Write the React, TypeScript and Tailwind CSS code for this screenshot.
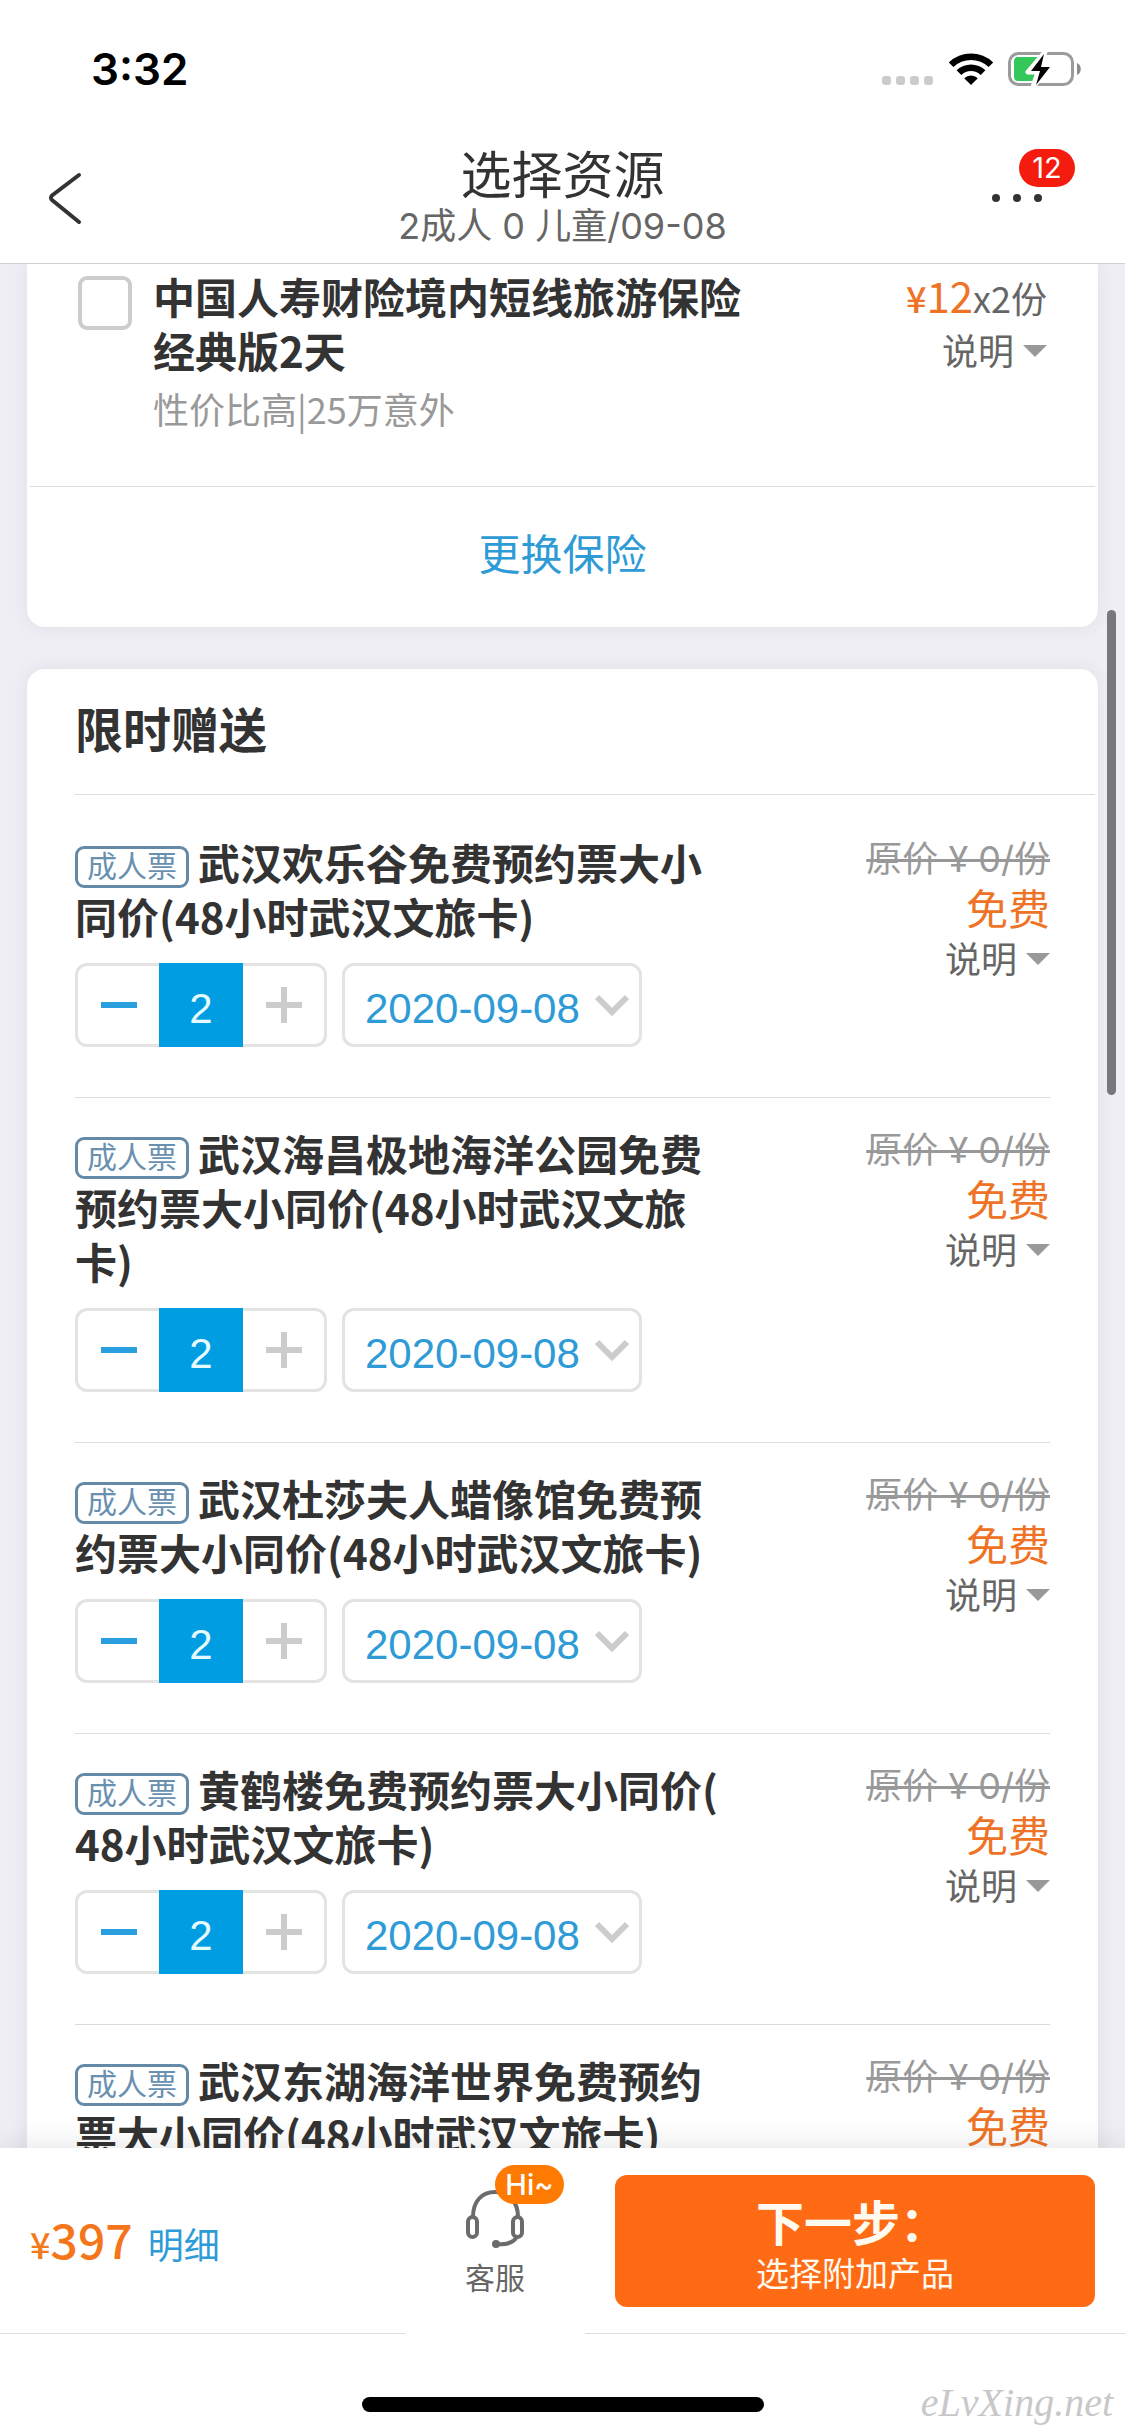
import { useState } from "react";

type Gift = { id: string; name: string };

const gifts: Gift[] = [
  { id: "happy-valley", name: "武汉欢乐谷免费预约票大小同价(48小时武汉文旅卡)" },
  { id: "polar-ocean", name: "武汉海昌极地海洋公园免费预约票大小同价(48小时武汉文旅卡)" },
  { id: "madame-tussauds", name: "武汉杜莎夫人蜡像馆免费预约票大小同价(48小时武汉文旅卡)" },
  { id: "yellow-crane", name: "黄鹤楼免费预约票大小同价(48小时武汉文旅卡)" },
  { id: "east-lake", name: "武汉东湖海洋世界免费预约票大小同价(48小时武汉文旅卡)" }
];

function StatusBar() {
  return (
    <div className="flex h-[138px] items-center justify-between pl-[91px] pr-[43px]">
      <span className="font-['Inter',sans-serif] text-[44px] font-semibold leading-[54px] text-black">3:32</span>
      <div className="flex items-center">
        <div className="mr-[15px] flex gap-[5px] pt-[23px]">
          {[0, 1, 2, 3].map((n) => (
            <span key={n} className="size-[9px] rounded-[3px] bg-[#cbcbcb]" />
          ))}
        </div>
        <svg className="mr-[14px]" width="46" height="34" viewBox="0 0 46 34">
          <path d="M.8 10.4a32 32 0 0 1 44.4 0l-4.6 4.7a25.3 25.3 0 0 0-35.2 0z" />
          <path d="M8.6 18.3a20.8 20.8 0 0 1 28.8 0l-4.7 4.7a14 14 0 0 0-19.4 0z" />
          <path d="M16.2 26.2a9.8 9.8 0 0 1 13.6 0L23 33z" />
        </svg>
        <svg width="74" height="36" viewBox="0 0 74 36">
          <rect x="1.5" y="2.5" width="63" height="31" rx="9" fill="#fff" stroke="#9b9b9b" strokeWidth="3" />
          <path d="M69 12c5 1.500 5 10.500 0 12z" fill="#8c8c8c" />
          <path d="M10 6h20L18 22h12l-2 8H10c-3 0-4-2-4-5V11c0-3 1-5 4-5z" fill="#34c759" />
          <path d="M37 1 20 21h10l-5 15 17-21H32z" fill="#000" stroke="#fff" strokeWidth="5" strokeLinejoin="round" />
          <path d="M36 3 23 20h9l-4 14 14-18h-9z" fill="#000" />
        </svg>
      </div>
    </div>
  );
}

function Header() {
  return (
    <header className="border-b border-[#cfcfd2] bg-white">
      <StatusBar />
      <div className="relative flex h-[125px] flex-col items-center pt-1">
        <button aria-label="返回" className="absolute left-[47px] top-[33px]">
          <svg width="36" height="54" viewBox="0 0 36 54" fill="none" stroke="#333" strokeWidth="4" strokeLinecap="round">
            <path d="M32 4 5 24.500a3 3 0 0 0 0 4.500L32 51" />
          </svg>
        </button>
        <h1 className="text-[51px] leading-[60px] text-[#333]">选择资源</h1>
        <p className="font-['Inter','Noto_Sans_CJK_SC',sans-serif] text-[36px] leading-[48px] text-[#666]">
          2成人 0 儿童/09-08
        </p>
        <button aria-label="更多" className="absolute right-[83px] top-[56px] flex gap-[13px]">
          <span className="size-2 rounded-full bg-[#333]" />
          <span className="size-2 rounded-full bg-[#333]" />
          <span className="size-2 rounded-full bg-[#333]" />
        </button>
        <span className="absolute right-[50px] top-[11px] flex h-[38px] w-[56px] items-center justify-center rounded-full bg-[#f41b0f] font-['Inter',sans-serif] text-[29px] text-white">
          12
        </span>
      </div>
    </header>
  );
}

function ExplainButton() {
  return (
    <button className="flex items-center gap-[9px] text-[36px] leading-[52px] text-[#666]">
      说明
      <svg className="mt-[4px]" width="24" height="12" viewBox="0 0 24 12" fill="#999">
        <path d="M0 0h24L12 12z" />
      </svg>
    </button>
  );
}

function InsuranceCard() {
  return (
    <section className="rounded-b-[18px] bg-white shadow-[0_0_18px_rgba(60,60,90,0.08)]">
      <div className="flex h-[222px] items-start pl-[51px] pr-[51px] pt-[5px]">
        <input
          id="insurance"
          type="checkbox"
          className="mt-[7px] size-[54px] shrink-0 appearance-none rounded-[9px] border-4 border-[#ccc] bg-white checked:bg-[#009de2]"
        />
        <label htmlFor="insurance" className="ml-[21px] block w-[600px]">
          <span className="block text-[42px] font-bold leading-[54px] text-[#333]">中国人寿财险境内短线旅游保险经典版2天</span>
          <span className="mt-[7px] block text-[36px] leading-[48px] text-[#999]">性价比高|25万意外</span>
        </label>
        <div className="ml-auto flex flex-col items-end">
          <p className="text-[36px] leading-[52px] text-[#666]">
            <span className="font-medium text-[#ee7326]">¥</span>
            <span className="text-[42px] text-[#ee7326]">12</span>x2份
          </p>
          <ExplainButton />
        </div>
      </div>
      <div className="mx-[3px] border-t border-[#dcdcdc]">
        <button className="block h-[140px] w-full pb-[10px] text-[42px] leading-[60px] text-[#2e9bd6]">更换保险</button>
      </div>
    </section>
  );
}

function Stepper({ name }: { name: string }) {
  const [count, setCount] = useState(2);

  return (
    <div className="flex h-[84px] w-[252px]">
      <button
        aria-label="减少"
        onClick={() => setCount(Math.max(0, count - 1))}
        className="flex w-[84px] items-center justify-center rounded-l-[12px] border-[3px] border-r-0 border-[#e3e3e3]"
      >
        <span className="h-[6px] w-[36px] bg-[#2a9fe0]" />
      </button>
      <input
        aria-label={`${name} 份数`}
        readOnly
        value={count}
        className="w-[84px] bg-[#009de2] pt-[6px] text-center font-['Liberation_Sans',sans-serif] text-[42px] text-[#e6fbff] outline-none"
      />
      <button
        aria-label="增加"
        onClick={() => setCount(Math.min(2, count + 1))}
        className="flex w-[84px] items-center justify-center rounded-r-[12px] border-[3px] border-l-0 border-[#e3e3e3]"
      >
        <svg width="36" height="36" viewBox="0 0 36 36" fill="#ccc">
          <path d="M15 0h6v15h15v6H21v15h-6V21H0v-6h15z" />
        </svg>
      </button>
    </div>
  );
}

function DateSelect({ name }: { name: string }) {
  return (
    <div className="relative h-[84px] w-[300px]">
      <select
        aria-label={`${name} 日期`}
        className="size-full appearance-none rounded-[12px] border-[3px] border-[#e3e3e3] bg-white pl-[20px] pt-[6px] font-['Liberation_Sans',sans-serif] text-[42px] text-[#2e9bd6]"
      >
        <option>2020-09-08</option>
      </select>
      <svg className="pointer-events-none absolute right-[13px] top-[31px]" width="34" height="24" viewBox="0 0 34 24" fill="none" stroke="#ccc" strokeWidth="6">
        <path d="M2 3l15 15L32 3" />
      </svg>
    </div>
  );
}

function GiftItem({ gift }: { gift: Gift }) {
  return (
    <li className="flex items-start justify-between border-b border-[#dcdcdc] pb-[50px] pt-[28px] first:pt-[40px]">
      <div className="w-[645px]">
        <h3 className="text-[42px] font-bold leading-[54px] text-[#333] [line-break:anywhere]">
          <span className="mr-[9px] mt-[11px] inline-flex h-[42px] w-[114px] items-center justify-center rounded-[9px] border-[3px] border-[#648aa8] pb-[6px] align-top text-[30px] font-normal leading-[36px] text-[#6a90b0]">
            成人票
          </span>
          {gift.name}
        </h3>
        <div className="mt-[20px] flex gap-[15px]">
          <Stepper name={gift.name} />
          <DateSelect name={gift.name} />
        </div>
      </div>
      <div className="flex flex-col items-end">
        <del className="font-['Inter','Noto_Sans_CJK_SC',sans-serif] text-[36px] leading-[48px] text-[#999]">
          原价 ¥ 0/份
        </del>
        <span className="text-[42px] leading-[48px] text-[#ee7326]">免费</span>
        <ExplainButton />
      </div>
    </li>
  );
}

function GiftCard() {
  return (
    <section className="rounded-[18px] bg-white pl-[48px] shadow-[0_0_18px_rgba(60,60,90,0.08)]">
      <h2 className="mr-[3px] border-b border-[#dcdcdc] pb-[37px] pt-[28px] text-[48px] font-bold leading-[60px] text-[#333]">
        限时赠送
      </h2>
      <ul className="mr-[48px]">
        {gifts.map((gift) => (
          <GiftItem key={gift.id} gift={gift} />
        ))}
      </ul>
    </section>
  );
}

function ServiceButton() {
  return (
    <button className="relative -mb-px flex w-[180px] flex-col items-center bg-white pt-[41px] text-[#666]">
      <svg width="60" height="60" viewBox="0 0 60 60" fill="none" stroke="#6b6b6b" strokeWidth="4">
        <path d="M8 28C8 12 17 3 30 3s23 9 23 25" />
        <rect x="3" y="28" width="9" height="20" rx="4.500" />
        <rect x="48" y="28" width="9" height="20" rx="4.500" />
        <path d="M52 48c-4 6-11 8-20 7" />
        <circle cx="31" cy="55" r="2" fill="#6b6b6b" />
      </svg>
      <span className="mt-[6px] text-[30px] leading-[42px]">客服</span>
      <span className="absolute left-[90px] top-[17px] flex h-[39px] w-[69px] items-center justify-center rounded-full bg-[#ff7a00] font-['Inter',sans-serif] text-[29px] font-medium text-white">
        Hi~
      </span>
    </button>
  );
}

function Footer() {
  return (
    <footer className="relative z-10 bg-white shadow-[0_0_30px_rgba(0,0,0,0.12)]">
      <div className="flex h-[186px] border-b border-[#dcdcdc]">
        <div className="flex flex-1 items-baseline pl-[30px] pt-[60px]">
          <span className="text-[36px] font-medium leading-[60px] text-[#f47a20]">¥</span>
          <span className="text-[48px] font-medium leading-[60px] text-[#f5761a]">397</span>
          <a href="#detail" className="ml-[15px] text-[36px] leading-[60px] text-[#2e9bd6]">明细</a>
        </div>
        <ServiceButton />
        <button className="ml-[30px] mr-[30px] mt-[27px] flex h-[132px] w-[480px] flex-col items-start rounded-[12px] bg-[#ff6a14] pl-[141px] pt-[15px] text-[#fffaf0]">
          <span className="text-[48px] font-bold leading-[60px]">下一步：</span>
          <span className="text-[33px] leading-[44px]">选择附加产品</span>
        </button>
      </div>
      <div className="relative flex h-[102px] items-end justify-center pb-[24px]">
        <span className="h-[15px] w-[402px] rounded-full bg-black" />
        <span className="absolute bottom-[9px] right-[12px] font-['Liberation_Serif',serif] text-[40px] italic leading-[48px] text-[#c8c8c8]">
          eLvXing.net
        </span>
      </div>
    </footer>
  );
}

export default function App() {
  return (
    <div className="flex h-screen flex-col bg-[#eeeef4] font-['Noto_Sans_CJK_SC',sans-serif]">
      <Header />
      <div className="relative min-h-0 flex-1">
        <main className="h-full space-y-[42px] overflow-y-auto px-[27px] [scrollbar-width:none]">
          <InsuranceCard />
          <GiftCard />
        </main>
        <span className="absolute right-[9px] top-[346px] h-[485px] w-[9px] rounded-full bg-[#78787c]" />
      </div>
      <Footer />
    </div>
  );
}
